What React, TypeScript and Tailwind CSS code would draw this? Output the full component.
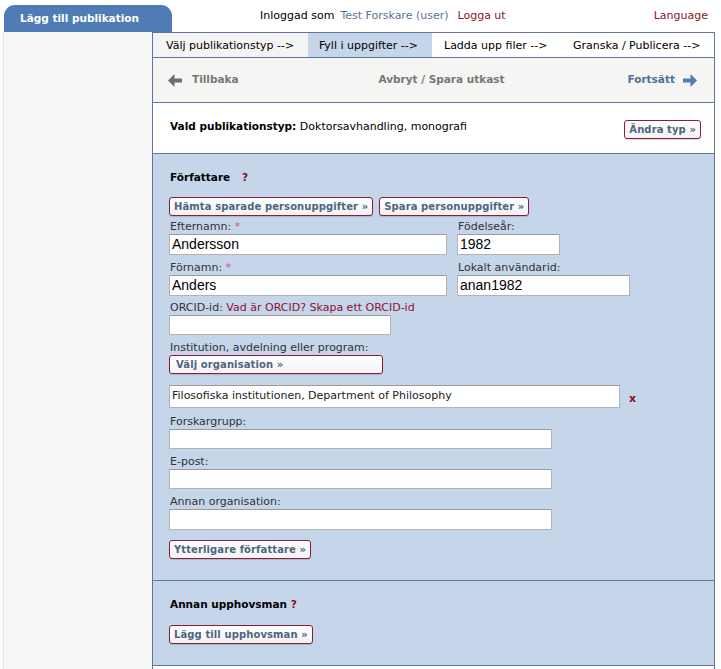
import * as React from "react";

const font = "font-['DejaVu_Sans',Verdana,sans-serif]";

function Btn({ children, className = "" }: { children: React.ReactNode; className?: string }) {
  return (
    <button
      className={`h-[19px] whitespace-nowrap px-[4px] rounded-[3px] border border-[#8c1c3c] bg-gradient-to-b from-white to-[#f3f3f3] text-[10px] font-bold leading-none tracking-[0.1px] text-[#4e6580] text-left shadow-[0_1px_1px_rgba(0,0,0,0.15)] ${className}`}
    >
      {children}
    </button>
  );
}

function Label({ text, req }: { text: string; req?: boolean }) {
  return (
    <div className="h-[14px] pl-px text-[11px] leading-[14px] text-[#333]">
      {text}
      {req && <span className="text-[#d0607a]"> *</span>}
    </div>
  );
}

function Input({ value = "", w, h = "h-[21px]", small }: { value?: string; w: string; h?: string; small?: boolean }) {
  return (
    <div
      className={`${w} ${h} flex items-center border border-[#b3b3b3] border-t-[#9a9a9a] bg-white px-[2px] ${
        small ? "text-[11px] text-[#222]" : "font-['Liberation_Sans',Arial,sans-serif] text-[14px] text-black"
      }`}
    >
      {value}
    </div>
  );
}

function Arrow({ dir, color }: { dir: "left" | "right"; color: string }) {
  return (
    <svg width="14" height="13" viewBox="0 0 14 13" className={dir === "left" ? "" : "rotate-180"}>
      <path d="M0 6.5 L6.5 0 L6.5 4.5 L14 4.5 L14 8.5 L6.5 8.5 L6.5 13 Z" fill={color} />
    </svg>
  );
}

export default function App() {
  return (
    <div className={`${font} w-[721px] h-[669px] overflow-hidden bg-white text-[11px] text-black`}>
      {/* Top bar */}
      <div className="flex h-[32px] items-end">
        <div className="ml-[4px] flex h-[27px] w-[168px] items-center rounded-t-[11px] bg-[#4f7cb4] pl-[16px] text-[10.5px] font-bold text-white">
          Lägg till publikation
        </div>
        <div className="flex h-[32px] flex-1 items-center pl-[88px] pr-[13px]">
          <span>Inloggad som</span>
          <span className="ml-[6px] text-[#5a7291]">Test Forskare (user)</span>
          <span className="ml-[9px] text-[#8b1429]">Logga ut</span>
          <span className="ml-auto text-[#8b1429]">Language</span>
        </div>
      </div>

      <div className="flex">
        {/* Sidebar */}
        <div className="ml-[3px] h-[637px] w-[149px] border-l border-[#e4e4e4] bg-[#f7f7f5]" />

        {/* Main */}
        <div className="w-[563px] border-x border-[#61769a]">
          {/* Steps */}
          <div className="flex h-[26px] items-center border-y border-[#61769a] leading-none">
            <div className="flex h-full w-[155px] items-center bg-[#f4f4f4] pl-[13px]">Välj publikationstyp --&gt;</div>
            <div className="flex h-full w-[124px] items-center bg-[#c5d5ea] pl-[11px]">Fyll i uppgifter --&gt;</div>
            <div className="flex h-full w-[129px] items-center pl-[12px]">Ladda upp filer --&gt;</div>
            <div className="flex h-full flex-1 items-center pl-[12px]">Granska / Publicera --&gt;</div>
          </div>

          {/* Nav */}
          <div className="flex h-[45px] items-center border-b border-[#61769a] bg-[#f5f5f3] pl-[15px] pr-[17px] text-[10.5px] font-bold">
            <div className="flex flex-1 items-center gap-[10px] text-[#777]">
              <Arrow dir="left" color="#6f6f6f" />
              <span>Tillbaka</span>
            </div>
            <div className="ml-[18px] text-[#777]">Avbryt / Spara utkast</div>
            <div className="flex flex-1 items-center justify-end gap-[8px] text-[#4f7197]">
              <span>Fortsätt</span>
              <Arrow dir="right" color="#4f7cb4" />
            </div>
          </div>

          {/* Publication type */}
          <div className="flex h-[51px] items-start justify-between border-b border-[#61769a] pl-[17px] pr-[13px] pt-[16px]">
            <div className="leading-[14px]">
              <span className="text-[10.5px] font-bold">Vald publikationstyp:</span> Doktorsavhandling, monografi
            </div>
            <Btn className="mt-px">Ändra typ »</Btn>
          </div>

          {/* Authors */}
          <div className="h-[427px] border-b border-[#61769a] bg-[#c5d5ea] pl-[16px] pt-[16px]">
            <div className="pl-px text-[10.5px] font-bold leading-[14px]">
              Författare <span className="ml-[8px] text-[#8b0a1f]">?</span>
            </div>
            <div className="mt-[13px] flex gap-[6px]">
              <Btn>Hämta sparade personuppgifter »</Btn>
              <Btn>Spara personuppgifter »</Btn>
            </div>

            <div className="mt-[4px] flex gap-[10px]">
              <div>
                <Label text="Efternamn:" req />
                <Input value="Andersson" w="w-[278px]" />
              </div>
              <div>
                <Label text="Födelseår:" />
                <Input value="1982" w="w-[103px]" />
              </div>
            </div>
            <div className="mt-[6px] flex gap-[10px]">
              <div>
                <Label text="Förnamn:" req />
                <Input value="Anders" w="w-[278px]" />
              </div>
              <div>
                <Label text="Lokalt användarid:" />
                <Input value="anan1982" w="w-[173px]" />
              </div>
            </div>

            <div className="mt-[5px]">
              <div className="h-[14px] pl-px leading-[14px] text-[#333]">
                ORCID-id: <span className="text-[#8b1429]">Vad är ORCID? Skapa ett ORCID-id</span>
              </div>
              <Input w="w-[222px]" h="h-[20px]" />
            </div>

            <div className="mt-[6px]">
              <Label text="Institution, avdelning eller program:" />
              <Btn className="w-[214px] pl-[6px]">Välj organisation »</Btn>
            </div>

            <div className="mt-[11px] flex items-end gap-[9px]">
              <Input value="Filosofiska institutionen, Department of Philosophy" w="w-[451px]" h="h-[23px]" small />
              <span className="mb-px font-bold text-[#8b0a1f]">x</span>
            </div>

            <div className="mt-[7px]">
              <Label text="Forskargrupp:" />
              <Input w="w-[383px]" h="h-[20px]" />
            </div>
            <div className="mt-[6px]">
              <Label text="E-post:" />
              <Input w="w-[383px]" h="h-[20px]" />
            </div>
            <div className="mt-[6px]">
              <Label text="Annan organisation:" />
              <Input w="w-[383px]" h="h-[21px]" />
            </div>
            <Btn className="mt-[10px]">Ytterligare författare »</Btn>
          </div>

          {/* Other creators */}
          <div className="h-[85px] border-b border-[#61769a] bg-[#c5d5ea] pl-[16px] pt-[16px]">
            <div className="pl-px text-[10.5px] font-bold leading-[14px]">
              Annan upphovsman <span className="text-[#8b0a1f]">?</span>
            </div>
            <Btn className="mt-[14px]">Lägg till upphovsman »</Btn>
          </div>
        </div>
      </div>
    </div>
  );
}
